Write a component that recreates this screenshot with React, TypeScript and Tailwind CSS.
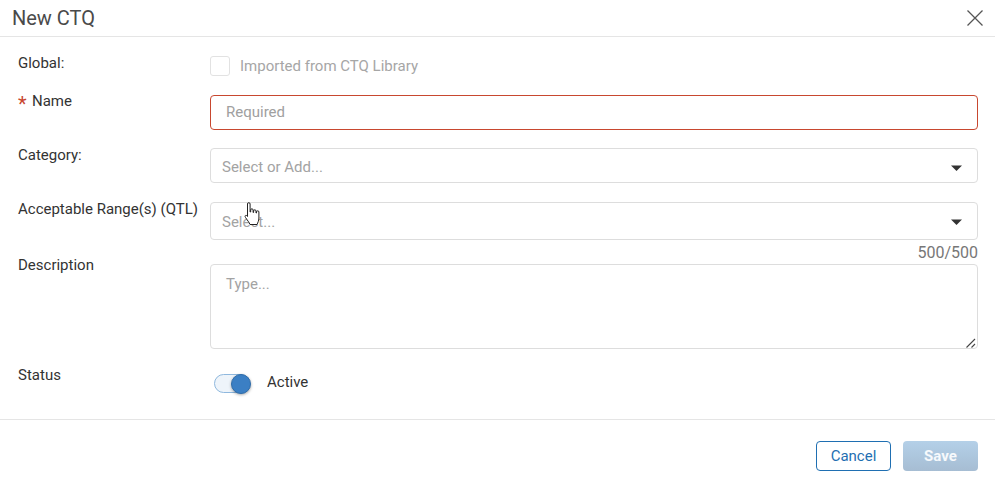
import React from "react";

function Caret() {
  return (
    <svg width="11" height="6" viewBox="0 0 11 6" className="shrink-0">
      <path d="M0 0.5 H11 L5.5 6 Z" fill="#333" />
    </svg>
  );
}

function Row({ label, children, className, labelClass }: { label: React.ReactNode; children: React.ReactNode; className: string; labelClass: string }) {
  return (
    <div className={"grid grid-cols-[192px_768px] " + className}>
      <div className={"text-[15px] leading-[20px] text-[#333] " + labelClass}>{label}</div>
      <div>{children}</div>
    </div>
  );
}

function Select({ text, h, extra }: { text: string; h: string; extra: string }) {
  return (
    <div className={"flex items-center justify-between rounded-[4px] border border-[#ddd] pl-[11px] pr-[15px] bg-white " + h + " " + extra}>
      <span className="text-[15px] text-[#a3a3a3]">{text}</span>
      <Caret />
    </div>
  );
}

export default function App() {
  return (
    <div className="relative w-[995px] h-[487px] bg-white overflow-hidden font-['Roboto',sans-serif]">
      <header className="h-[37px] border-b border-[#e5e5e5] flex items-center justify-between pl-[12px] pr-[11px]">
        <h1 className="text-[20px] leading-[34px] text-[#4a4a4a]">New CTQ</h1>
        <svg width="18" height="18" viewBox="0 0 18 18" fill="none" stroke="#555" strokeWidth="1.3">
          <path d="M1.5 1.5 L16.5 16.5 M16.5 1.5 L1.5 16.5" />
        </svg>
      </header>

      <form className="pl-[18px]">
        <Row label="Global:" className="mt-[19px]" labelClass="-mt-[3px]">
          <label className="flex items-center gap-[10px] h-[20px]">
            <span className="w-[20px] h-[20px] rounded-[3px] border border-[#e2e2e2] bg-white" />
            <span className="text-[15px] text-[#a6a6a6]">Imported from CTQ Library</span>
          </label>
        </Row>

        <Row
          label={
            <span className="flex items-center h-[20px]">
              <span className="text-[#c8472f] text-[20px] w-[14px] leading-[20px] pt-[6px]">*</span>
              <span>Name</span>
            </span>
          }
          className="mt-[19px]"
          labelClass="-mt-[4px]"
        >
          <div className="h-[35px] rounded-[4px] border border-[#c8472f] flex items-center pl-[15px]">
            <span className="text-[15px] text-[#a0a0a0]">Required</span>
          </div>
        </Row>

        <Row label="Category:" className="mt-[18px]" labelClass="-mt-[3px]">
          <Select text="Select or Add..." h="h-[35px]" extra="pt-[4px]" />
        </Row>

        <Row label="Acceptable Range(s) (QTL)" className="mt-[19px]" labelClass="-mt-[3px]">
          <Select text="Select..." h="h-[38px]" extra="pt-[2px]" />
        </Row>

        <div className="grid grid-cols-[192px_768px]">
          <div />
          <div className="text-right text-[16px] leading-[24px] h-[24px] pt-[1px] text-[#777]">500/500</div>
        </div>

        <Row label="Description" className="" labelClass="-mt-[9px]">
          <div className="relative">
            <textarea
              readOnly
              placeholder="Type..."
              className="block w-full h-[85px] rounded-[4px] border border-[#ddd] pl-[15px] pt-[8px] text-[15px] outline-none resize-none placeholder:text-[#a3a3a3]"
            />
            <svg className="absolute right-[2px] bottom-[1px]" width="10" height="10" viewBox="0 0 10 10" fill="none" stroke="#444" strokeWidth="1.1">
              <path d="M0.5 9.5 L9 1 M5.5 9.5 L9 6" />
            </svg>
          </div>
        </Row>

        <Row label="Status" className="mt-[23px]" labelClass="-mt-[7px]">
          <div className="flex items-center h-[22px] pl-[4px] gap-[17px]">
            <span className="relative w-[36px] h-[19px] rounded-full border border-[#8fb8de] bg-[#eef4fa]">
              <span className="absolute -right-[2px] -top-[1px] w-[20px] h-[20px] rounded-full bg-[#3b7fc4] border border-[#2f6dab] shadow-[0_1px_3px_rgba(0,0,0,0.35)]" />
            </span>
            <span className="text-[15px] text-[#333] -mt-[2px]">Active</span>
          </div>
        </Row>
      </form>

      <footer className="mt-[25px] border-t border-[#e5e5e5] flex justify-end gap-[12px] pt-[21px] pr-[17px]">
        <button className="w-[75px] h-[30px] rounded-[4px] border border-[#1f6fb2] text-[#1f6fb2] text-[15px] bg-white">Cancel</button>
        <button className="w-[75px] h-[30px] rounded-[4px] text-white/90 font-bold text-[15px] bg-gradient-to-b from-[#b4d0e8] to-[#a6bdd3]">Save</button>
      </footer>

      <svg className="absolute left-[244px] top-[202px]" width="17" height="25" viewBox="0 0 17 25">
        <path
          d="M3.5 2 a1.3 1.3 0 0 1 2.6 0 V10 h0.6 V8 a1.2 1.2 0 0 1 2.4 0 V10.5 h0.5 V9 a1.2 1.2 0 0 1 2.4 0 V11 h0.5 V10 a1.2 1.2 0 0 1 2.4 0 V16 c0 3 -1.2 4.5 -1.8 6.5 H6 C5 20 3.5 18.5 1.5 15.5 C0.5 14 1.5 12.8 2.6 13.5 L3.5 14.5 Z"
          fill="#fff"
          stroke="#222"
          strokeWidth="1"
        />
      </svg>
    </div>
  );
}
